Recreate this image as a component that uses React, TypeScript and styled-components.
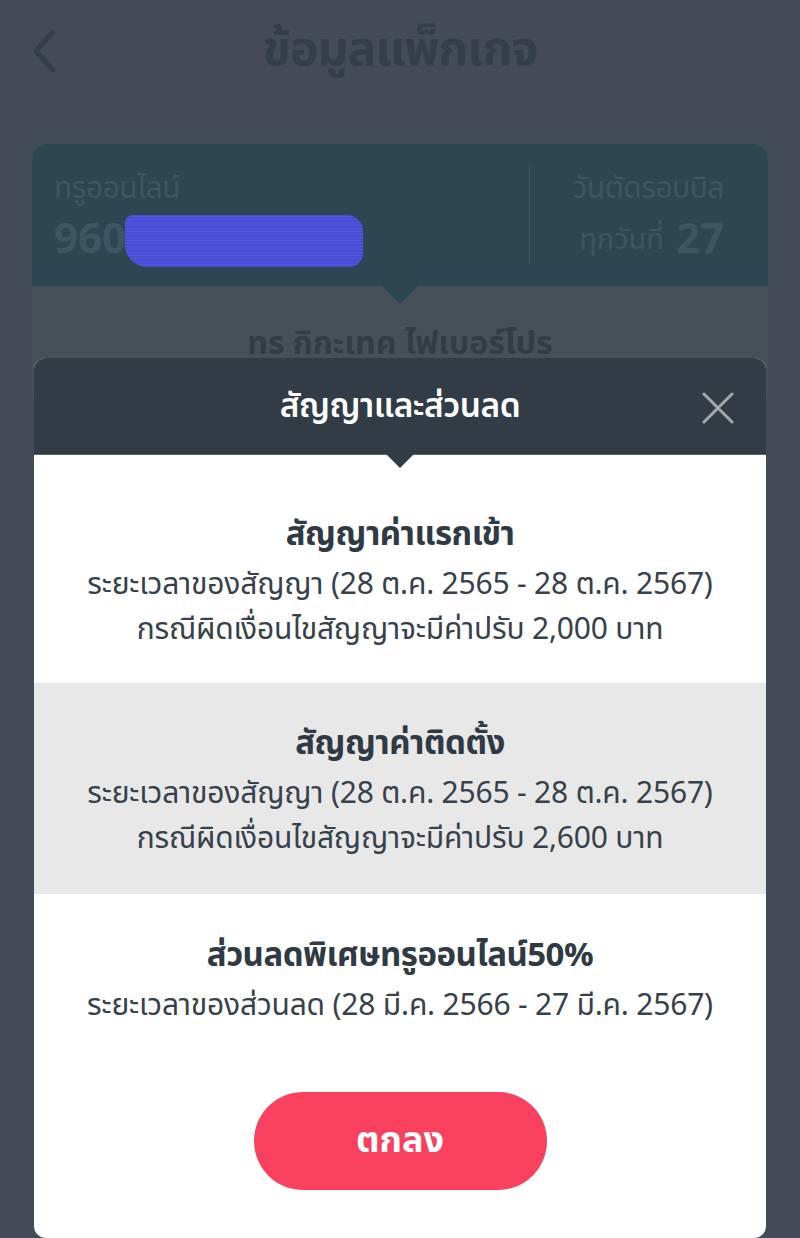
import React from "react";
import styled, { createGlobalStyle } from "styled-components";

const Global = createGlobalStyle`
  html, body { margin: 0; padding: 0; background: #434c56; }
  body { font-family: "Noto Sans Thai", "Noto Sans", "Open Sans", sans-serif; }
  * { box-sizing: border-box; }
`;

const Page = styled.div`
  position: relative;
  width: 800px;
  height: 1238px;
  overflow: hidden;
  background: #434c56;
`;

const TopBar = styled.header`
  height: 108px;
  display: grid;
  grid-template-columns: 90px 1fr 90px;
  align-items: center;
  padding-bottom: 6px;
`;

const BackBtn = styled.div`
  display: flex;
  justify-content: center;
  padding-right: 2px;
`;

const PageTitle = styled.h1`
  margin: 0;
  text-align: center;
  font-size: 48px;
  font-weight: 700;
  color: #323e49;
  letter-spacing: -1px;
  line-height: 60px;
`;

const Card = styled.section`
  margin: 36px 32px 0;
  border-radius: 16px;
  overflow: hidden;
  background: #465059;
`;

const CardTop = styled.div`
  position: relative;
  background: #2c4652;
  height: 142px;
  display: grid;
  grid-template-columns: 1fr 1px 238px;
  align-items: center;
  padding: 20px 0 20px 22px;
`;

const Pointer = styled.span<{ $color: string }>`
  position: absolute;
  left: 50%;
  bottom: -18px;
  transform: translateX(-50%);
  width: 0;
  height: 0;
  border-left: 18px solid transparent;
  border-right: 18px solid transparent;
  border-top: 18px solid ${(p) => p.$color};
  z-index: 1;
`;

const InfoCol = styled.div<{ $align?: string }>`
  display: flex;
  flex-direction: column;
  align-items: ${(p) => p.$align || "flex-start"};
  padding-right: ${(p) => (p.$align === "flex-end" ? "44px" : "0")};
`;

const Divider = styled.div`
  width: 1px;
  height: 100px;
  background: #3b5560;
`;

const InfoLabel = styled.div`
  font-size: 30px;
  line-height: 50px;
  height: 50px;
  letter-spacing: -0.5px;
  color: #3d5761;
`;

const NumberRow = styled.div`
  display: flex;
  align-items: center;
  height: 52px;
`;

const BigNum = styled.span`
  font-size: 42px;
  font-weight: 700;
  color: #3d5761;
  line-height: 52px;
`;

const Redact = styled.span`
  display: inline-block;
  width: 238px;
  height: 52px;
  margin-left: -1px;
  margin-top: 2px;
  background: repeating-linear-gradient(
    180deg,
    #4347d2 0px,
    #565ce2 2px,
    #3a3fc4 3px
  );
  border-radius: 8px 16px 14px 22px;
`;

const BillDay = styled.div`
  display: flex;
  gap: 12px;
  height: 52px;
  align-items: center;
`;

const BillSmall = styled.span`
  font-size: 29px;
  line-height: 52px;
  color: #3d5761;
`;

const PackageName = styled.div`
  padding: 34px 0 40px;
  text-align: center;
  font-size: 32px;
  font-weight: 700;
  color: #303c46;
`;

const Modal = styled.div`
  position: absolute;
  left: 34px;
  right: 34px;
  top: 358px;
  bottom: 0;
  background: #fff;
  border-radius: 12px;
  overflow: hidden;
  display: flex;
  flex-direction: column;
`;

const ModalHeader = styled.div`
  position: relative;
  height: 97px;
  flex: none;
  background: #323c47;
  display: flex;
  align-items: center;
  justify-content: center;
  border-bottom: 1px solid #5c656e;
`;

const ModalTitle = styled.h2`
  margin: 0;
  font-size: 33.5px;
  font-weight: 600;
  color: #ffffff;
  letter-spacing: -0.5px;
`;

const CloseBtn = styled.button`
  position: absolute;
  right: 32px;
  top: 34px;
  width: 32px;
  height: 32px;
  padding: 0;
  border: 0;
  background: transparent;
  cursor: pointer;
`;

const Row = styled.div<{ $shade?: boolean; $top: number; $bottom: number }>`
  background: ${(p) => (p.$shade ? "#e8e8e8" : "#ffffff")};
  padding: ${(p) => p.$top}px 10px ${(p) => p.$bottom}px;
  text-align: center;
`;

const RowTitle = styled.div`
  font-size: 33px;
  font-weight: 700;
  line-height: 50px;
  color: #2f3a44;
  margin-bottom: 3px;
  letter-spacing: -0.5px;
`;

const RowLine = styled.div`
  font-size: 30px;
  line-height: 45px;
  color: #37414b;
  letter-spacing: -0.2px;
`;

const Footer = styled.div`
  flex: 1;
  display: flex;
  justify-content: center;
  padding-top: 63px;
`;

const OkButton = styled.button`
  width: 293px;
  height: 98px;
  border-radius: 49px;
  border: 0;
  background: #f9405f;
  color: #fff;
  font-family: inherit;
  font-size: 36px;
  font-weight: 700;
  cursor: pointer;
`;

const rows = [
  {
    title: "สัญญาค่าแรกเข้า",
    lines: [
      "ระยะเวลาของสัญญา (28 ต.ค. 2565 - 28 ต.ค. 2567)",
      "กรณีผิดเงื่อนไขสัญญาจะมีค่าปรับ 2,000 บาท",
    ],
    shade: false,
    top: 55,
    bottom: 30,
  },
  {
    title: "สัญญาค่าติดตั้ง",
    lines: [
      "ระยะเวลาของสัญญา (28 ต.ค. 2565 - 28 ต.ค. 2567)",
      "กรณีผิดเงื่อนไขสัญญาจะมีค่าปรับ 2,600 บาท",
    ],
    shade: true,
    top: 36,
    bottom: 32,
  },
  {
    title: "ส่วนลดพิเศษทรูออนไลน์50%",
    lines: ["ระยะเวลาของส่วนลด (28 มี.ค. 2566 - 27 มี.ค. 2567)"],
    shade: false,
    top: 37,
    bottom: 0,
  },
];

export default function App() {
  return (
    <Page>
      <Global />
      <TopBar>
        <BackBtn>
          <svg width="30" height="46" viewBox="0 0 30 46" fill="none">
            <path
              d="M24 4 L7 23 L24 42"
              stroke="#323e49"
              strokeWidth="5"
              strokeLinecap="round"
              strokeLinejoin="round"
            />
          </svg>
        </BackBtn>
        <PageTitle>ข้อมูลแพ็กเกจ</PageTitle>
        <span />
      </TopBar>
      <Card>
        <CardTop>
          <InfoCol>
            <InfoLabel>ทรูออนไลน์</InfoLabel>
            <NumberRow>
              <BigNum>960</BigNum>
              <Redact />
            </NumberRow>
          </InfoCol>
          <Divider />
          <InfoCol $align="flex-end">
            <InfoLabel>วันตัดรอบบิล</InfoLabel>
            <BillDay>
              <BillSmall>ทุกวันที่</BillSmall>
              <BigNum>27</BigNum>
            </BillDay>
          </InfoCol>
          <Pointer $color="#2c4652" />
        </CardTop>
        <PackageName>ทร กิกะเทค ไฟเบอร์โปร</PackageName>
      </Card>

      <Modal>
        <ModalHeader>
          <ModalTitle>สัญญาและส่วนลด</ModalTitle>
          <CloseBtn aria-label="close">
            <svg width="32" height="32" viewBox="0 0 32 32">
              <path
                d="M2 2 L30 30 M30 2 L2 30"
                stroke="#a3a9ae"
                strokeWidth="3"
                strokeLinecap="round"
              />
            </svg>
          </CloseBtn>
          <Pointer $color="#323c47" style={{ bottom: -14 }} />
        </ModalHeader>
        {rows.map((r) => (
          <Row key={r.title} $shade={r.shade} $top={r.top} $bottom={r.bottom}>
            <RowTitle>{r.title}</RowTitle>
            {r.lines.map((l) => (
              <RowLine key={l}>{l}</RowLine>
            ))}
          </Row>
        ))}
        <Footer>
          <OkButton>ตกลง</OkButton>
        </Footer>
      </Modal>
    </Page>
  );
}
